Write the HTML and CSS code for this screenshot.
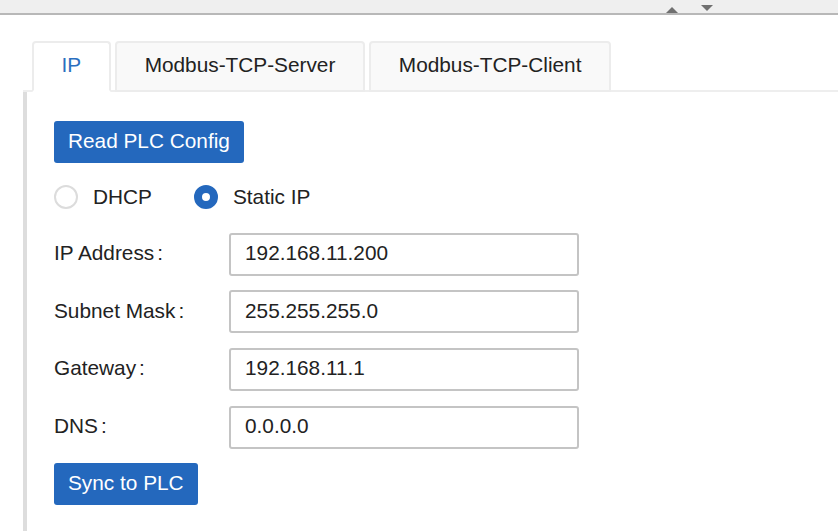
FILE: index.html
```html
<!DOCTYPE html>
<html lang="en">
<head>
  <meta charset="UTF-8" />
  <meta name="viewport" content="width=device-width, initial-scale=1.0"/>
  <title>PLC Network Config</title>
  <link rel="stylesheet" href="styles.css">
</head>
<body>

  <div class="splitter">
    <span class="arrow-up" title="Expand"></span>
    <span class="arrow-down" title="Collapse"></span>
  </div>

  <div class="panel">
    <div class="tabs">
      <div class="tab active">IP</div>
      <div class="tab">Modbus-TCP-Server</div>
      <div class="tab">Modbus-TCP-Client</div>
    </div>

    <div class="tab-body">
      <button class="btn" id="read">Read PLC Config</button>

      <div class="radio-row">
        <label class="radio"><span class="dot"></span>DHCP</label>
        <label class="radio checked"><span class="dot"></span>Static IP</label>
      </div>

      <div class="form">
        <div class="field">
          <label>IP Address<span class="colon">:</span></label>
          <input type="text" value="192.168.11.200">
        </div>
        <div class="field">
          <label>Subnet Mask<span class="colon">:</span></label>
          <input type="text" value="255.255.255.0">
        </div>
        <div class="field">
          <label>Gateway<span class="colon">:</span></label>
          <input type="text" value="192.168.11.1">
        </div>
        <div class="field">
          <label>DNS<span class="colon">:</span></label>
          <input type="text" value="0.0.0.0">
        </div>
      </div>

      <button class="btn" id="sync">Sync to PLC</button>
    </div>
  </div>

</body>
</html>
```

FILE: styles.css
```css
body {
  margin: 0;
  font-family: "Liberation Sans", Arial, sans-serif;
  font-size: 20.8px;
  color: #333;
  background: #fff;
}

.splitter {
  height: 13px;
  background: #efefef;
  border-bottom: 2px solid #b8b8b8;
  display: flex;
  justify-content: flex-end;
  gap: 23px;
  padding-right: 125px;
}

.arrow-up {
  margin-top: 7px;
  width: 0;
  height: 0;
  border-left: 6px solid transparent;
  border-right: 6px solid transparent;
  border-bottom: 6px solid #707070;
}

.arrow-down {
  margin-top: 5px;
  width: 0;
  height: 0;
  border-left: 6px solid transparent;
  border-right: 6px solid transparent;
  border-top: 6px solid #707070;
}

.panel {
  margin-top: 26px;
  margin-left: 23px;
}

.tabs {
  display: flex;
  gap: 4.5px;
  padding-left: 9px;
  border-bottom: 2px solid #eeeeee;
}

.tab {
  height: 44px;
  line-height: 44px;
  padding: 0 27.5px 3px;
  margin-bottom: -2px;
  border: 2px solid #ececec;
  border-radius: 4px 4px 0 0;
  background: #f9f9f9;
  color: #222;
}

.tab.active {
  background: #fff;
  color: #2a6fc0;
  border-bottom-color: #fff;
}

.tab-body {
  border-left: 4px solid #dddddd;
  padding: 28.5px 0 27px 27px;
}

.btn {
  display: block;
  height: 42px;
  padding: 0 14px 2px;
  border: none;
  border-radius: 3px;
  background: #2468bd;
  color: #fff;
  font-family: inherit;
  font-size: 20.8px;
  cursor: pointer;
}

.radio-row {
  display: flex;
  gap: 42px;
  margin: 22px 0 24px;
  height: 24px;
}

.radio {
  display: flex;
  align-items: center;
  gap: 15px;
  color: #222;
}

.radio .dot {
  box-sizing: border-box;
  width: 24px;
  height: 24px;
  border: 2px solid #dcdcdc;
  border-radius: 50%;
  background: #fff;
}

.radio.checked .dot {
  border: 8px solid #2468bd;
}

.form {
  display: flex;
  flex-direction: column;
  gap: 14.7px;
}

.field {
  display: flex;
  align-items: center;
}

.field label {
  width: 175px;
  color: #222;
  padding-bottom: 2px;
}

.colon {
  margin-left: 3px;
}

.field input {
  box-sizing: border-box;
  width: 350px;
  height: 43px;
  padding: 0 14px 2px;
  border: 2px solid #c4c4c4;
  border-radius: 3px;
  font-family: inherit;
  font-size: 20.8px;
  color: #222;
  outline: none;
}

#sync {
  margin-top: 14.7px;
}
```
